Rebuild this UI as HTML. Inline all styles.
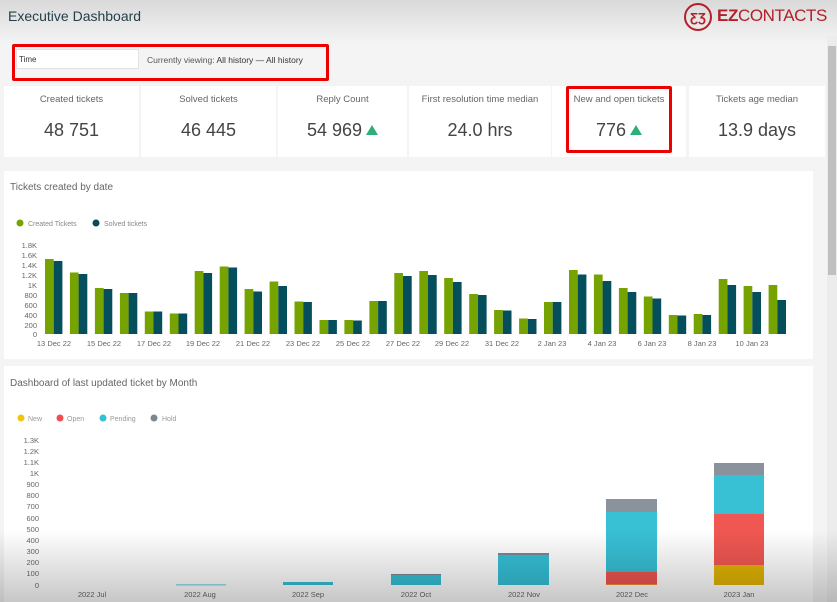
<!DOCTYPE html>
<html><head><meta charset="utf-8">
<style>
*{margin:0;padding:0;box-sizing:border-box}
body{width:837px;height:602px;overflow:hidden;position:relative;font-family:"Liberation Sans",sans-serif;background:#f4f4f4}
.hdr{position:absolute;left:0;top:0;width:837px;height:44px;background:linear-gradient(#d9d9d9,#efefef 80%,#f3f3f3)}
.title{position:absolute;left:8px;top:8px;font-size:14px;color:#24404a}
.abs{position:absolute}
.card{position:absolute;background:#fff;top:86px;height:71px;text-align:center}
.card .l{font-size:9.5px;color:#666;margin-top:8px}
.card .v{font-size:18px;color:#444;margin-top:15px}
.tri{display:inline-block;width:0;height:0;border-left:6px solid transparent;border-right:6px solid transparent;border-bottom:10px solid #2eae78;margin-left:4px;vertical-align:1px}
.red{position:absolute;border:3px solid #ee0000;border-radius:2px}
svg text{font-family:"Liberation Sans",sans-serif}
</style></head><body>
<div class="hdr"></div>
<div class="title">Executive Dashboard</div>
<svg class="abs" style="left:683px;top:2px" width="32" height="32"><circle cx="15" cy="15" r="13" fill="none" stroke="#b3202a" stroke-width="2"/><text x="15" y="20" text-anchor="middle" font-size="13" fill="#b3202a" font-weight="bold">ƸƷ</text></svg>
<div class="abs" style="left:717px;top:6px;font-size:17px;color:#b3202a;letter-spacing:-0.4px"><b>EZ</b>CONTACTS</div>
<div class="abs" style="left:827px;top:36px;width:10px;height:566px;background:#ececec"></div>
<div class="abs" style="left:828px;top:46px;width:8px;height:229px;background:#c0c0c0"></div>

<div class="abs" style="left:16px;top:49px;width:123px;height:20px;background:#fff;border:1px solid #e2e2e2;font-size:8px;padding:5px 2px;color:#333">Time</div>
<div class="abs" style="left:147px;top:55px;font-size:8.5px;color:#555">Currently viewing: <span style="color:#333">All history — All history</span></div>
<div class="red" style="left:12px;top:44px;width:317px;height:37px"></div>

<div class="card" style="left:4px;width:135px"><div class="l">Created tickets</div><div class="v">48 751</div></div>
<div class="card" style="left:141px;width:135px"><div class="l">Solved tickets</div><div class="v">46 445</div></div>
<div class="card" style="left:278px;width:129px"><div class="l">Reply Count</div><div class="v">54 969<span class="tri"></span></div></div>
<div class="card" style="left:409px;width:142px"><div class="l">First resolution time median</div><div class="v">24.0 hrs</div></div>
<div class="card" style="left:552px;width:134px"><div class="l">New and open tickets</div><div class="v">776<span class="tri"></span></div></div>
<div class="card" style="left:689px;width:136px"><div class="l">Tickets age median</div><div class="v">13.9 days</div></div>
<div class="red" style="left:566px;top:86px;width:106px;height:67px"></div>

<div class="abs" style="left:4px;top:171px;width:809px;height:188px;background:#fff"></div>
<div class="abs" style="left:4px;top:366px;width:809px;height:236px;background:#fff"></div>
<svg class="abs" style="left:0;top:0" width="837" height="602">
<g font-size="10" fill="#666"><text x="10" y="190">Tickets created by date</text><text x="10" y="386">Dashboard of last updated ticket by Month</text></g>
<circle cx="20" cy="223" r="3.5" fill="#76a300"/><text x="28" y="226" font-size="7" fill="#888">Created Tickets</text>
<circle cx="96" cy="223" r="3.5" fill="#054a57"/><text x="104" y="226" font-size="7" fill="#888">Solved tickets</text>
<g font-size="7.5" fill="#666" text-anchor="end">
<text x="37" y="248">1.8K</text><text x="37" y="258">1.6K</text><text x="37" y="268">1.4K</text><text x="37" y="278">1.2K</text><text x="37" y="288">1K</text><text x="37" y="298">800</text><text x="37" y="308">600</text><text x="37" y="318">400</text><text x="37" y="328">200</text><text x="37" y="337">0</text></g>
<g font-size="7.5" fill="#666" text-anchor="middle">
<text x="54" y="346">13 Dec 22</text><text x="104" y="346">15 Dec 22</text><text x="154" y="346">17 Dec 22</text><text x="203" y="346">19 Dec 22</text><text x="253" y="346">21 Dec 22</text><text x="303" y="346">23 Dec 22</text><text x="353" y="346">25 Dec 22</text><text x="403" y="346">27 Dec 22</text><text x="452" y="346">29 Dec 22</text><text x="502" y="346">31 Dec 22</text><text x="552" y="346">2 Jan 23</text><text x="602" y="346">4 Jan 23</text><text x="652" y="346">6 Jan 23</text><text x="702" y="346">8 Jan 23</text><text x="752" y="346">10 Jan 23</text></g>
<g fill="#76a300">
<rect x="45" y="259" width="8.7" height="75"/><rect x="69.9" y="272.5" width="8.7" height="61.5"/><rect x="94.9" y="288" width="8.7" height="46"/><rect x="119.9" y="293" width="8.7" height="41"/><rect x="144.8" y="311.5" width="8.7" height="22.5"/><rect x="169.8" y="313.5" width="8.7" height="20.5"/><rect x="194.7" y="271" width="8.7" height="63"/><rect x="219.7" y="266.5" width="8.7" height="67.5"/><rect x="244.6" y="289" width="8.7" height="45"/><rect x="269.6" y="281.5" width="8.7" height="52.5"/><rect x="294.5" y="301.5" width="8.7" height="32.5"/><rect x="319.5" y="320" width="8.7" height="14"/><rect x="344.4" y="320" width="8.7" height="14"/><rect x="369.4" y="301" width="8.7" height="33"/><rect x="394.3" y="273" width="8.7" height="61"/><rect x="419.3" y="271" width="8.7" height="63"/><rect x="444.2" y="278" width="8.7" height="56"/><rect x="469.2" y="294" width="8.7" height="40"/><rect x="494.1" y="310" width="8.7" height="24"/><rect x="519.1" y="318.5" width="8.7" height="15.5"/><rect x="544" y="302" width="8.7" height="32"/><rect x="569" y="270" width="8.7" height="64"/><rect x="593.9" y="274.5" width="8.7" height="59.5"/><rect x="618.9" y="288" width="8.7" height="46"/><rect x="643.8" y="296.5" width="8.7" height="37.5"/><rect x="668.8" y="315" width="8.7" height="19"/><rect x="693.7" y="314" width="8.7" height="20"/><rect x="718.7" y="279" width="8.7" height="55"/><rect x="743.6" y="286" width="8.7" height="48"/><rect x="768.6" y="285" width="8.7" height="49"/></g>
<g fill="#054f5c">
<rect x="53.7" y="261" width="8.7" height="73"/><rect x="78.6" y="274" width="8.7" height="60"/><rect x="103.6" y="289" width="8.7" height="45"/><rect x="128.6" y="293" width="8.7" height="41"/><rect x="153.5" y="311.5" width="8.7" height="22.5"/><rect x="178.5" y="313.5" width="8.7" height="20.5"/><rect x="203.4" y="273" width="8.7" height="61"/><rect x="228.4" y="267.5" width="8.7" height="66.5"/><rect x="253.3" y="291.5" width="8.7" height="42.5"/><rect x="278.3" y="286" width="8.7" height="48"/><rect x="303.2" y="302" width="8.7" height="32"/><rect x="328.2" y="320" width="8.7" height="14"/><rect x="353.1" y="320.5" width="8.7" height="13.5"/><rect x="378.1" y="301" width="8.7" height="33"/><rect x="403" y="276" width="8.7" height="58"/><rect x="428" y="275" width="8.7" height="59"/><rect x="452.9" y="282" width="8.7" height="52"/><rect x="477.9" y="295" width="8.7" height="39"/><rect x="502.8" y="310.5" width="8.7" height="23.5"/><rect x="527.8" y="319" width="8.7" height="15"/><rect x="552.7" y="302" width="8.7" height="32"/><rect x="577.7" y="274.5" width="8.7" height="59.5"/><rect x="602.6" y="281" width="8.7" height="53"/><rect x="627.6" y="292" width="8.7" height="42"/><rect x="652.5" y="298.5" width="8.7" height="35.5"/><rect x="677.5" y="315.5" width="8.7" height="18.5"/><rect x="702.4" y="315" width="8.7" height="19"/><rect x="727.4" y="285" width="8.7" height="49"/><rect x="752.3" y="292" width="8.7" height="42"/><rect x="777.3" y="300" width="8.7" height="34"/></g>

<circle cx="21" cy="418" r="3.5" fill="#f2c40f"/><text x="28" y="421" font-size="7" fill="#999">New</text>
<circle cx="60" cy="418" r="3.5" fill="#ee4e4e"/><text x="67" y="421" font-size="7" fill="#999">Open</text>
<circle cx="103" cy="418" r="3.5" fill="#35c0d6"/><text x="110" y="421" font-size="7" fill="#999">Pending</text>
<circle cx="154" cy="418" r="3.5" fill="#7c8794"/><text x="162" y="421" font-size="7" fill="#999">Hold</text>
<g font-size="7.5" fill="#666" text-anchor="end">
<text x="39" y="443">1.3K</text><text x="39" y="454">1.2K</text><text x="39" y="465">1.1K</text><text x="39" y="476">1K</text><text x="39" y="487">900</text><text x="39" y="498">800</text><text x="39" y="509">700</text><text x="39" y="521">600</text><text x="39" y="532">500</text><text x="39" y="543">400</text><text x="39" y="554">300</text><text x="39" y="565">200</text><text x="39" y="576">100</text><text x="39" y="588">0</text></g>
<g font-size="7.5" fill="#666" text-anchor="middle">
<text x="92" y="597">2022 Jul</text><text x="200" y="597">2022 Aug</text><text x="308" y="597">2022 Sep</text><text x="416" y="597">2022 Oct</text><text x="524" y="597">2022 Nov</text><text x="632" y="597">2022 Dec</text><text x="739" y="597">2023 Jan</text></g>
<rect x="176" y="584.5" width="50" height="0.8" fill="#35c0d6"/>
<rect x="283" y="582" width="50" height="3" fill="#35c0d6"/>
<rect x="391" y="574" width="50" height="1.3" fill="#7c8794"/><rect x="391" y="575" width="50" height="10" fill="#35c0d6"/>
<rect x="498" y="553" width="51" height="2" fill="#7c8794"/><rect x="498" y="555" width="51" height="30" fill="#35c0d6"/>
<rect x="606" y="499" width="51" height="13" fill="#8a939c"/><rect x="606" y="512" width="51" height="60" fill="#38c0d5"/><rect x="606" y="572" width="51" height="12.5" fill="#ef5550"/><rect x="606" y="584.5" width="51" height="0.5" fill="#f2c40f"/>
<rect x="714" y="463" width="50" height="12" fill="#8a939c"/><rect x="714" y="475" width="50" height="39" fill="#38c0d5"/><rect x="714" y="514" width="50" height="51" fill="#f05752"/><rect x="714" y="565" width="50" height="20" fill="#e1b405"/>
</svg>
<div class="abs" style="left:0;top:530px;width:837px;height:72px;background:linear-gradient(rgba(0,0,0,0),rgba(0,0,0,0.22))"></div>
</body></html>
